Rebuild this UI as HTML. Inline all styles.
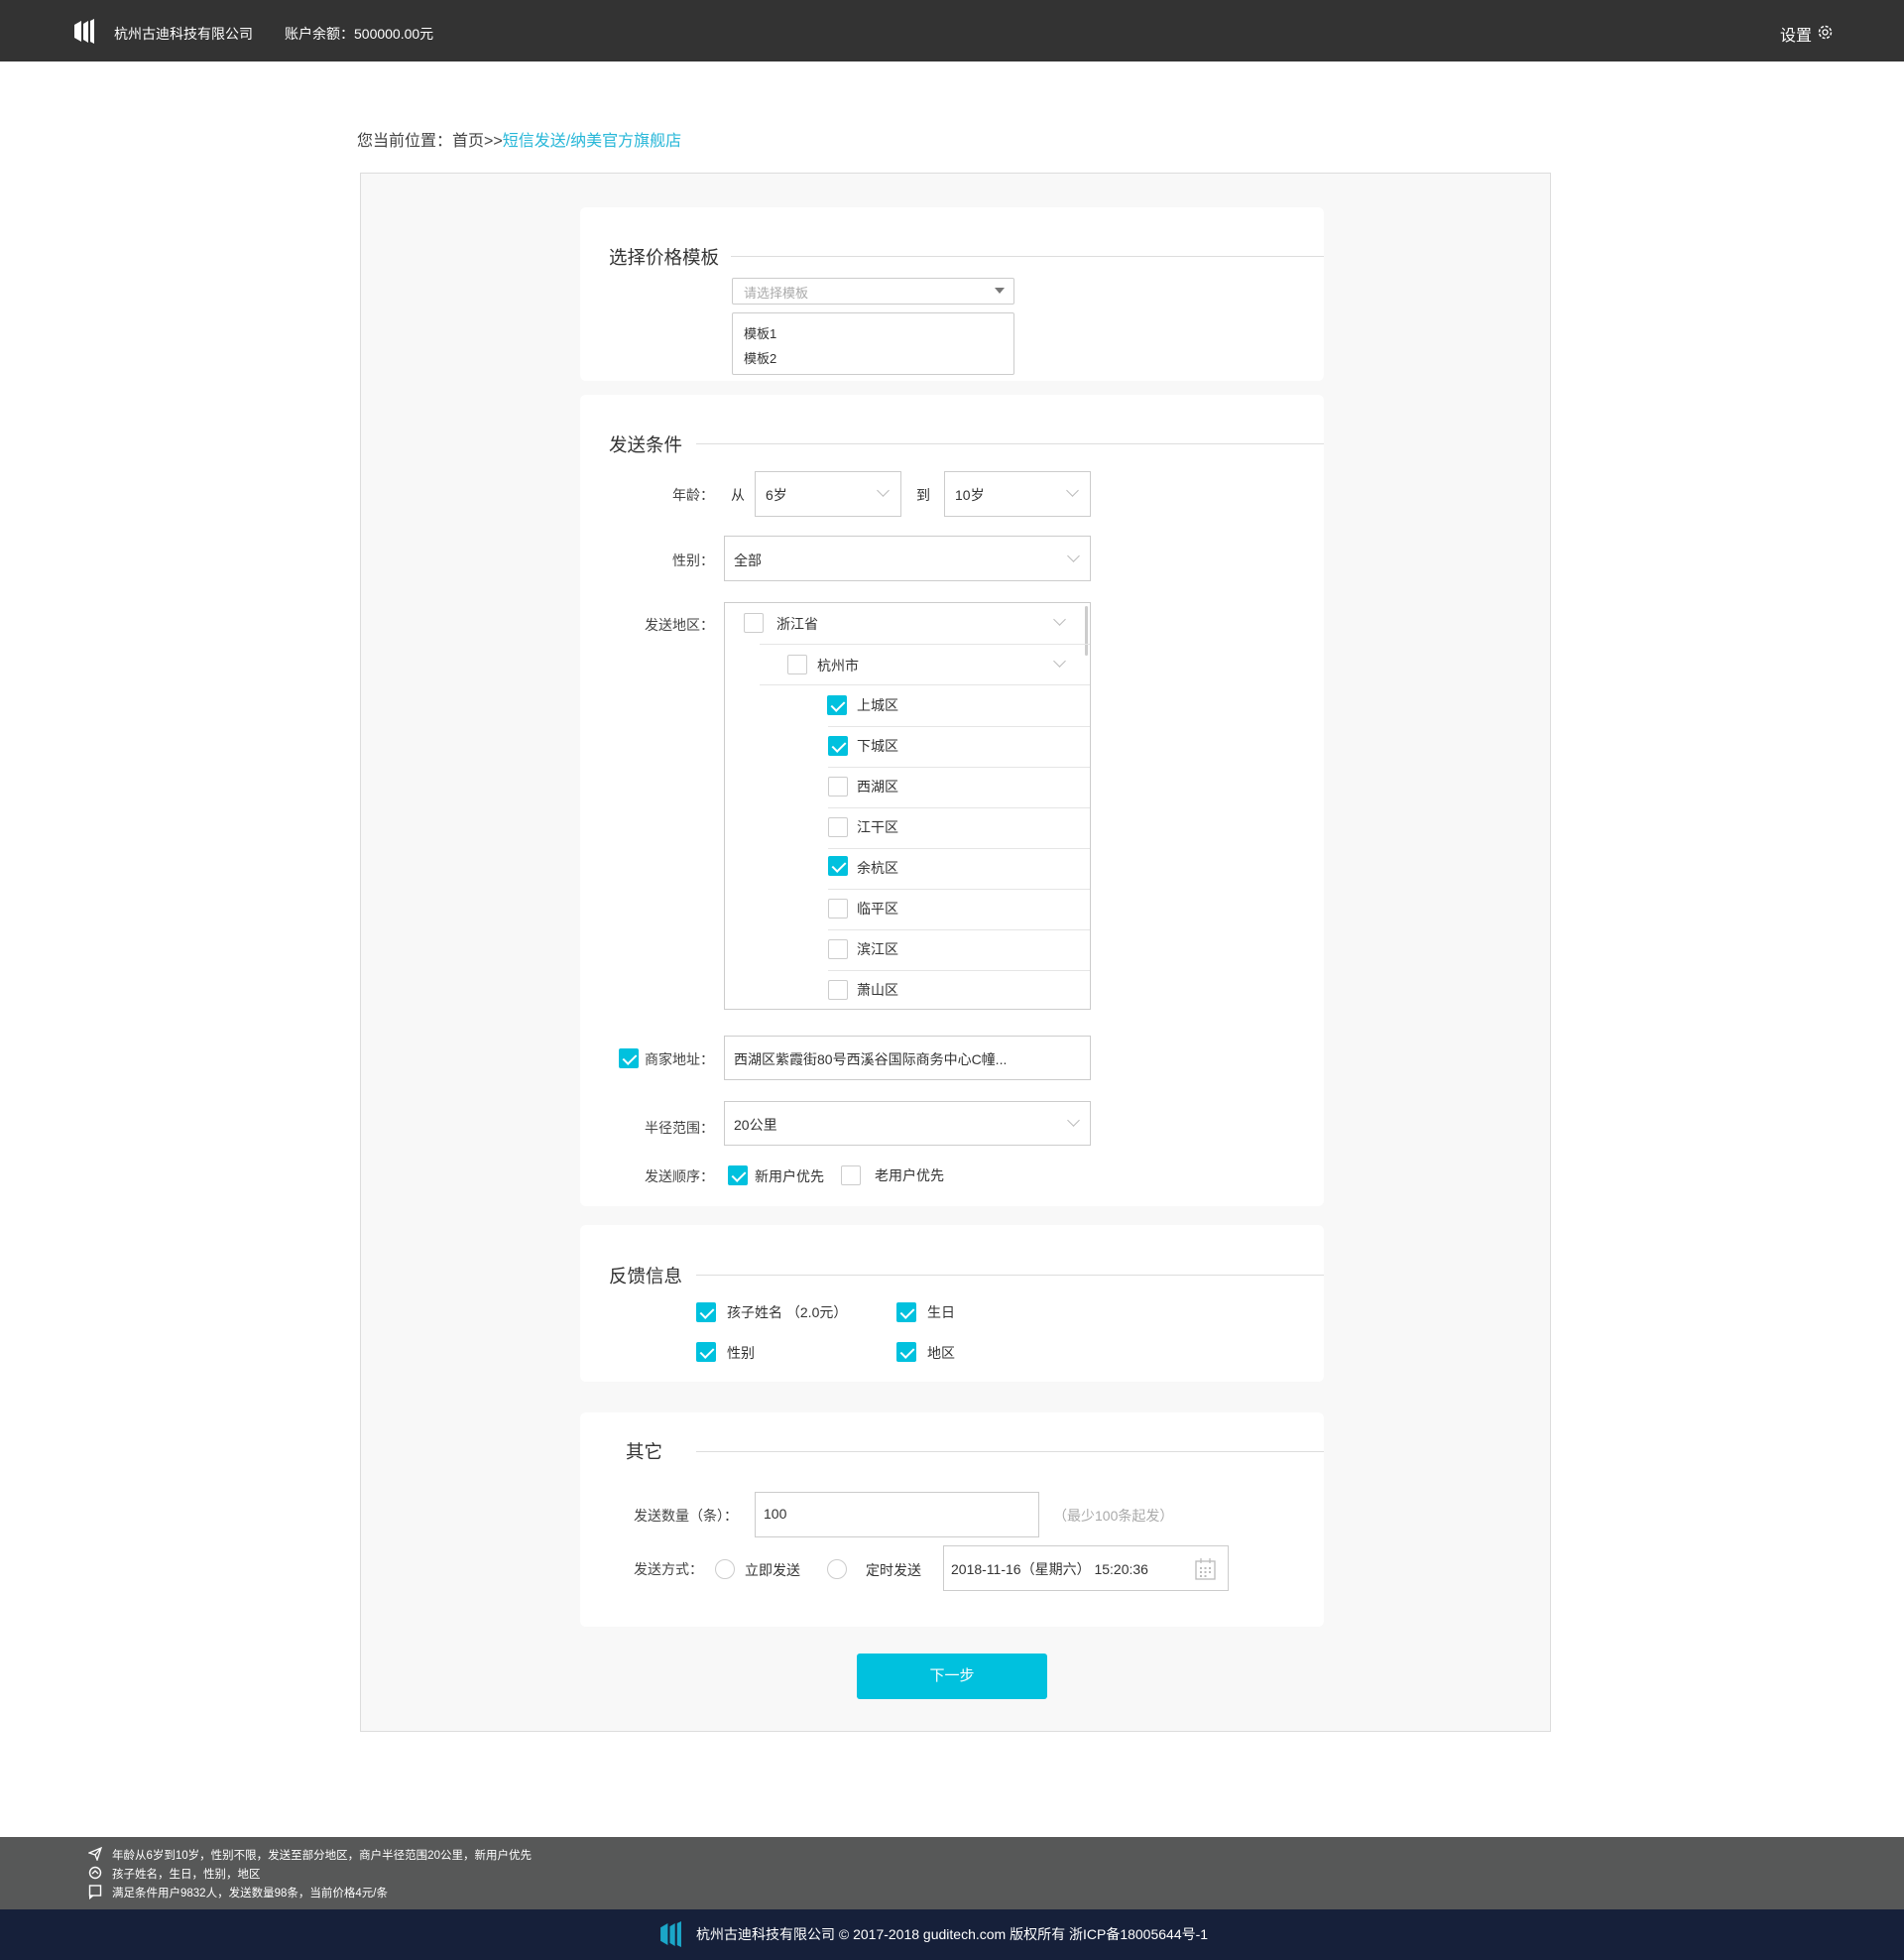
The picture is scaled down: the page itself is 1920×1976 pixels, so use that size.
<!DOCTYPE html>
<html><head><meta charset="utf-8"><style>
*{margin:0;padding:0;box-sizing:border-box}
body{width:1920px;height:1976px;position:relative;background:#fff;font-family:"Liberation Sans","Noto Sans CJK SC",sans-serif;color:#333;font-size:15px;overflow:hidden}
.a{position:absolute;white-space:nowrap}
.card{position:absolute;left:585px;width:750px;background:#fff;border-radius:6px}
.tt{position:absolute;font-size:18.5px;color:#333}
.ln{position:absolute;height:1px;background:#ddd;right:0}
.box{position:absolute;border:1px solid #ccc;background:#fff}
.lab{position:absolute;font-size:14px;color:#444;text-align:right;white-space:nowrap}
.cb{position:absolute;width:20px;height:20px;border:1px solid #ccc;background:#fff;border-radius:2px}
.cb.on{background:#00c1de;border-color:#00c1de}
.cb.on:after{content:"";position:absolute;left:6px;top:2px;width:6px;height:11px;border:solid #fff;border-width:0 2px 2px 0;transform:rotate(45deg)}
.chev{position:absolute;width:9px;height:9px;border:solid #bbb;border-width:0 1px 1px 0;transform:rotate(45deg)}
.txt{position:absolute;font-size:14px;color:#333;white-space:nowrap}
</style></head><body>
<div class="a" style="left:0;top:0;width:1920px;height:62px;background:#333"></div>
<svg class="a" style="left:73px;top:18px" width="23" height="27" viewBox="0 0 23 27"><path d="M2 7 L9 3 V24 L2 20 Z" fill="#fff"/><path d="M11 6 L16 3 V25 L11 22 Z" fill="#fff"/><path d="M18 3 L22 1 V26 L18 24 Z" fill="#fff"/></svg>
<div class="a" style="left:115px;top:24px;font-size:14px;color:#fff">杭州古迪科技有限公司</div>
<div class="a" style="left:287px;top:24px;font-size:14px;color:#fff">账户余额：500000.00元</div>
<div class="a" style="left:1795px;top:22px;font-size:16px;color:#fff">设置</div>
<svg class="a" style="left:1832px;top:24px" width="17" height="17" viewBox="0 0 17 17"><circle cx="8.5" cy="8.5" r="6" fill="none" stroke="#fff" stroke-width="1.5" stroke-dasharray="3 1.7"/><circle cx="8.5" cy="8.5" r="2.5" fill="none" stroke="#fff" stroke-width="1.3"/></svg>

<div class="a" style="left:360px;top:128px;font-size:16px;color:#444">您当前位置：首页&gt;&gt;<span style="color:#28b7d8">短信发送/纳美官方旗舰店</span></div>

<div class="a" style="left:363px;top:174px;width:1201px;height:1572px;background:#f8f8f8;border:1px solid #ddd"></div>

<div class="card" style="top:209px;height:175px">
<div class="tt" style="left:29px;top:37px">选择价格模板</div>
<div class="ln" style="left:152px;top:49px"></div>
<div class="box" style="left:153px;top:71px;width:285px;height:27px;border-radius:2px"><span class="txt" style="left:11px;top:4px;color:#aaa;font-size:13px">请选择模板</span><span class="a" style="left:264px;top:9px;width:0;height:0;border-left:5px solid transparent;border-right:5px solid transparent;border-top:6px solid #777"></span></div>
<div class="box" style="left:153px;top:106px;width:285px;height:63px;border-radius:2px"><span class="txt" style="left:11px;top:10px;font-size:13px">模板1</span><span class="txt" style="left:11px;top:35px;font-size:13px">模板2</span></div>
</div>

<div class="card" style="top:398px;height:818px">
<div class="tt" style="left:29px;top:37px">发送条件</div>
<div class="ln" style="left:117px;top:49px"></div>
</div>
<div class="lab" style="left:640px;top:489px;width:80px">年龄：</div>
<div class="txt" style="left:737px;top:489px">从</div>
<div class="box" style="left:761px;top:475px;width:148px;height:46px"><span class="txt" style="left:10px;top:13px">6岁</span><span class="chev" style="left:124px;top:14px"></span></div>
<div class="txt" style="left:924px;top:489px">到</div>
<div class="box" style="left:952px;top:475px;width:148px;height:46px"><span class="txt" style="left:10px;top:13px">10岁</span><span class="chev" style="left:124px;top:14px"></span></div>
<div class="lab" style="left:640px;top:555px;width:80px">性别：</div>
<div class="box" style="left:730px;top:540px;width:370px;height:46px"><span class="txt" style="left:9px;top:14px">全部</span><span class="chev" style="left:347px;top:15px"></span></div>
<div class="lab" style="left:620px;top:620px;width:100px">发送地区：</div>
<div class="box" style="left:730px;top:607px;width:370px;height:411px;overflow:hidden">
<div class="a" style="left:363px;top:3px;width:3px;height:50px;background:#ccc;border-radius:2px"></div>
<div class="cb" style="left:19px;top:10px"></div><span class="txt" style="left:52px;top:11px">浙江省</span><span class="chev" style="left:333px;top:12px"></span>
<div class="a" style="left:35px;top:41px;right:0;height:1px;background:#e5e5e5"></div>
<div class="cb" style="left:63px;top:52px"></div><span class="txt" style="left:93px;top:53px">杭州市</span><span class="chev" style="left:333px;top:54px"></span>
<div class="a" style="left:35px;top:82px;right:0;height:1px;background:#e5e5e5"></div>
<div class="cb on" style="left:103px;top:93px"></div><span class="txt" style="left:133px;top:93px">上城区</span>
<div class="a" style="left:104px;top:124px;right:0;height:1px;background:#e5e5e5"></div>
<div class="cb on" style="left:104px;top:134px"></div><span class="txt" style="left:133px;top:134px">下城区</span>
<div class="a" style="left:104px;top:165px;right:0;height:1px;background:#e5e5e5"></div>
<div class="cb" style="left:104px;top:175px"></div><span class="txt" style="left:133px;top:175px">西湖区</span>
<div class="a" style="left:104px;top:206px;right:0;height:1px;background:#e5e5e5"></div>
<div class="cb" style="left:104px;top:216px"></div><span class="txt" style="left:133px;top:216px">江干区</span>
<div class="a" style="left:104px;top:247px;right:0;height:1px;background:#e5e5e5"></div>
<div class="cb on" style="left:104px;top:255px"></div><span class="txt" style="left:133px;top:257px">余杭区</span>
<div class="a" style="left:104px;top:288px;right:0;height:1px;background:#e5e5e5"></div>
<div class="cb" style="left:104px;top:298px"></div><span class="txt" style="left:133px;top:298px">临平区</span>
<div class="a" style="left:104px;top:329px;right:0;height:1px;background:#e5e5e5"></div>
<div class="cb" style="left:104px;top:339px"></div><span class="txt" style="left:133px;top:339px">滨江区</span>
<div class="a" style="left:104px;top:370px;right:0;height:1px;background:#e5e5e5"></div>
<div class="cb" style="left:104px;top:380px"></div><span class="txt" style="left:133px;top:380px">萧山区</span>
</div>
<div class="cb on" style="left:624px;top:1057px"></div>
<div class="lab" style="left:640px;top:1058px;width:80px">商家地址：</div>
<div class="box" style="left:730px;top:1044px;width:370px;height:45px"><span class="txt" style="left:9px;top:13px">西湖区紫霞街80号西溪谷国际商务中心C幢...</span></div>
<div class="lab" style="left:640px;top:1127px;width:80px">半径范围：</div>
<div class="box" style="left:730px;top:1110px;width:370px;height:45px"><span class="txt" style="left:9px;top:13px">20公里</span><span class="chev" style="left:347px;top:14px"></span></div>
<div class="lab" style="left:640px;top:1176px;width:80px">发送顺序：</div>
<div class="cb on" style="left:734px;top:1175px"></div><span class="txt" style="left:761px;top:1176px">新用户优先</span>
<div class="cb" style="left:848px;top:1175px"></div><span class="txt" style="left:882px;top:1175px">老用户优先</span>

<div class="card" style="top:1235px;height:158px">
<div class="tt" style="left:29px;top:38px">反馈信息</div>
<div class="ln" style="left:117px;top:50px"></div>
</div>
<div class="cb on" style="left:702px;top:1313px"></div><span class="txt" style="left:733px;top:1313px">孩子姓名 （2.0元）</span>
<div class="cb on" style="left:904px;top:1313px"></div><span class="txt" style="left:935px;top:1313px">生日</span>
<div class="cb on" style="left:702px;top:1353px"></div><span class="txt" style="left:733px;top:1354px">性别</span>
<div class="cb on" style="left:904px;top:1353px"></div><span class="txt" style="left:935px;top:1354px">地区</span>

<div class="card" style="top:1424px;height:216px">
<div class="tt" style="left:46px;top:26px">其它</div>
<div class="ln" style="left:117px;top:39px"></div>
</div>
<div class="txt" style="left:639px;top:1518px;color:#444">发送数量（条）：</div>
<div class="box" style="left:761px;top:1504px;width:287px;height:46px"><span class="txt" style="left:8px;top:13px">100</span></div>
<div class="txt" style="left:1062px;top:1518px;color:#aaa">（最少100条起发）</div>
<div class="txt" style="left:639px;top:1572px;color:#444">发送方式：</div>
<div class="a" style="left:721px;top:1572px;width:20px;height:20px;border:1px solid #ccc;border-radius:50%"></div><span class="txt" style="left:751px;top:1573px">立即发送</span>
<div class="a" style="left:834px;top:1572px;width:20px;height:20px;border:1px solid #ccc;border-radius:50%"></div><span class="txt" style="left:873px;top:1573px">定时发送</span>
<div class="box" style="left:951px;top:1558px;width:288px;height:46px"><span class="txt" style="left:7px;top:13px">2018-11-16（星期六） 15:20:36</span>
<svg class="a" style="left:253px;top:12px" width="21" height="22" viewBox="0 0 21 22"><rect x="1" y="3" width="19" height="18" fill="none" stroke="#bbb" stroke-width="1.3"/><line x1="6" y1="0" x2="6" y2="5" stroke="#bbb" stroke-width="1.3"/><line x1="15" y1="0" x2="15" y2="5" stroke="#bbb" stroke-width="1.3"/><g fill="#bbb"><rect x="5" y="9" width="2" height="2"/><rect x="9.5" y="9" width="2" height="2"/><rect x="14" y="9" width="2" height="2"/><rect x="5" y="13" width="2" height="2"/><rect x="9.5" y="13" width="2" height="2"/><rect x="14" y="13" width="2" height="2"/><rect x="5" y="17" width="2" height="2"/><rect x="9.5" y="17" width="2" height="2"/></g></svg></div>

<div class="a" style="left:864px;top:1667px;width:192px;height:46px;background:#00c1de;border-radius:3px;color:#fff;font-size:15px;text-align:center;line-height:46px">下一步</div>

<div class="a" style="left:0;top:1852px;width:1920px;height:73px;background:#575858"></div>
<svg class="a" style="left:89px;top:1862px" width="14" height="14" viewBox="0 0 14 14"><path d="M1 6 L13 1 L9 13 L7 8 Z M7 8 L13 1" fill="none" stroke="#fff" stroke-width="1.3"/></svg>
<div class="a" style="left:113px;top:1862px;font-size:11.5px;color:#fff">年龄从6岁到10岁，性别不限，发送至部分地区，商户半径范围20公里，新用户优先</div>
<svg class="a" style="left:89px;top:1881px" width="14" height="14" viewBox="0 0 14 14"><circle cx="7" cy="7" r="5.5" fill="none" stroke="#fff" stroke-width="1.4"/><path d="M4 8 L7 5 L10 8" fill="none" stroke="#fff" stroke-width="1.3"/></svg>
<div class="a" style="left:113px;top:1881px;font-size:11.5px;color:#fff">孩子姓名，生日，性别，地区</div>
<svg class="a" style="left:89px;top:1900px" width="14" height="15" viewBox="0 0 14 15"><rect x="1.5" y="1" width="11" height="10" fill="none" stroke="#fff" stroke-width="1.4"/><path d="M1.5 11 V14 L5 11" fill="#fff" stroke="#fff"/></svg>
<div class="a" style="left:113px;top:1900px;font-size:11.5px;color:#fff">满足条件用户9832人，发送数量98条，当前价格4元/条</div>
<div class="a" style="left:0;top:1925px;width:1920px;height:51px;background:#16203a"></div>
<svg class="a" style="left:664px;top:1935px" width="24" height="30" viewBox="0 0 23 27"><path d="M2 7 L9 3 V24 L2 20 Z" fill="#1ba6c8"/><path d="M11 6 L16 3 V25 L11 22 Z" fill="#1ba6c8"/><path d="M18 3 L22 1 V26 L18 24 Z" fill="#1ba6c8"/></svg>
<div class="a" style="left:702px;top:1940px;font-size:14px;color:#fff">杭州古迪科技有限公司 © 2017-2018 guditech.com 版权所有 浙ICP备18005644号-1</div>
</body></html>
